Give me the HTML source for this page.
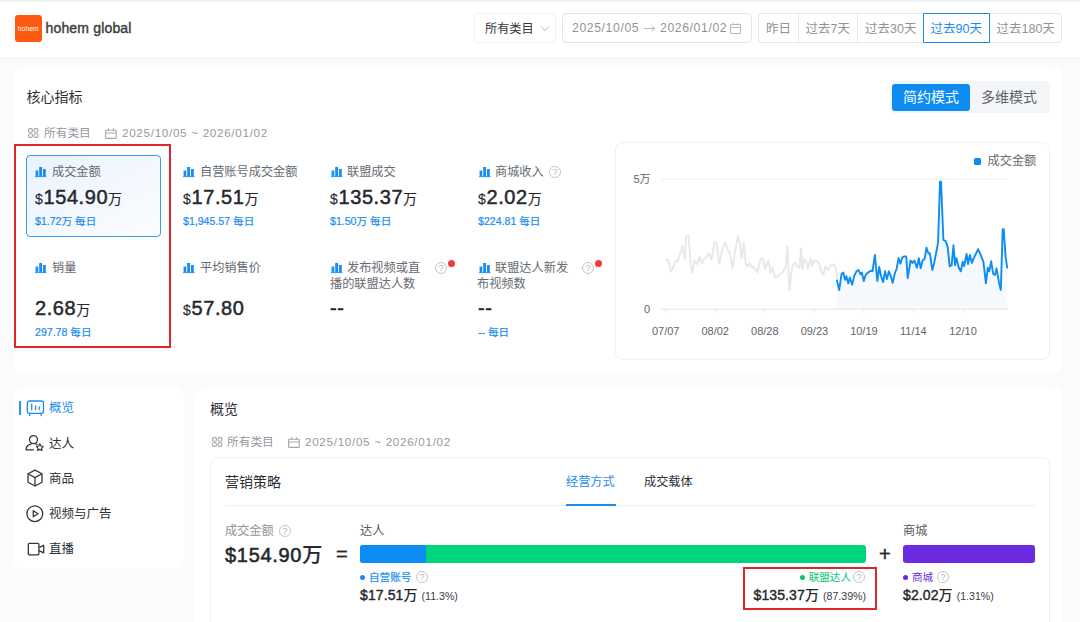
<!DOCTYPE html>
<html lang="zh-CN">
<head>
<meta charset="utf-8">
<title>hohem global</title>
<style>
*{box-sizing:border-box;margin:0;padding:0}
html,body{width:1080px;height:622px;overflow:hidden}
body{background:#fafbfc;font-family:"Liberation Sans","Noto Sans CJK SC",sans-serif;color:#333;position:relative;font-size:12px}
.abs{position:absolute;white-space:nowrap}
.card{position:absolute;background:#fff;border-radius:8px}
.t12{font-size:12.2px;line-height:16px}
.sb{font-size:12.5px;line-height:16px;color:#2b2f36}
.sb.blue{color:#1a8ef0}
.t11{font-size:10.6px;line-height:14px}
.t14{font-size:14px;line-height:20px}
.grey{color:#8f9399}
.hb{font-size:12.500px;line-height:16px}
.fl{font-size:11.700px;line-height:16px;color:#95999f}
.lab{color:#666a71}
.blue{color:#1a8ef0}
.t11.blue{-webkit-text-stroke:.2px #1a8ef0}
.val{font-weight:normal;-webkit-text-stroke:.48px #25282d;color:#25282d;line-height:26px;font-size:20px;letter-spacing:.55px}
.val small{font-size:14px;font-weight:normal;-webkit-text-stroke:.15px #25282d;letter-spacing:.8px}
.val .w{font-size:14px;font-weight:400;-webkit-text-stroke:.15px #25282d}
.dot{display:inline-block;width:5px;height:5px;border-radius:50%;background:currentColor;margin-right:4px;vertical-align:1.5px}
.q{display:inline-block;width:12px;height:12px;border:1px solid #c3c6cb;border-radius:50%;color:#b0b4ba;font-size:9px;line-height:10px;text-align:center;vertical-align:middle;font-family:"Liberation Sans",sans-serif}
svg{position:absolute;overflow:visible}
</style>
</head>
<body>
<!-- header -->
<div class="abs" style="left:0;top:0;width:1080px;height:59px;background:#fff;border-bottom:1px solid #eef0f2"></div>
<div class="abs" style="left:0;top:0;width:1080px;height:2px;background:#f1f2f3"></div>
<div class="abs" style="left:15px;top:15px;width:26.500px;height:26.500px;border-radius:3px;background:#fb5a10;color:#fff;font-size:6.800px;line-height:28px;text-align:center;letter-spacing:0">hohem</div>
<div class="abs" style="left:45.500px;top:18px;font-size:14px;line-height:20px;font-weight:normal;-webkit-text-stroke:.4px #3a3d42;color:#3a3d42;letter-spacing:.17px">hohem global</div>

<div class="abs" style="left:474px;top:13px;width:82px;height:30px;border:1px solid #eff0f2;border-radius:4px;background:#fff"></div>
<div class="abs t12" style="left:485px;top:21.300px;color:#33373d">所有类目</div>
<svg style="left:539.500px;top:25px" width="10" height="7" viewBox="0 0 10 7"><path d="M.8 1l4.200 4.600L9.200 1" fill="none" stroke="#b9bcc2" stroke-width="1"/></svg>

<div class="abs" style="left:562px;top:13px;width:190px;height:30px;border:1px solid #e2e4e8;border-radius:4px;background:#fff"></div>
<div class="abs t12" style="left:572px;top:20px;color:#8f9399;letter-spacing:.62px">2025/10/05</div>
<svg style="left:644px;top:24px" width="11" height="8" viewBox="0 0 11 8"><path d="M0 4.500h10.500M7.500 1.800l3 2.700-3 2.700" fill="none" stroke="#b5b9bf" stroke-width="1"/></svg>
<div class="abs t12" style="left:660px;top:20px;color:#8f9399;letter-spacing:.62px">2026/01/02</div>
<svg style="left:730px;top:23px" width="11" height="11" viewBox="0 0 11 11"><rect x="0.5" y="1.5" width="10" height="9" rx=".5" fill="none" stroke="#b5b9bf"/><path d="M3 0v2.500M8 0v2.500M1 4.500h9" stroke="#b5b9bf"/></svg>

<div class="abs" style="left:758px;top:13px;width:304px;height:30px;border:1px solid #e6e8eb;border-radius:4px;background:#fff"></div>
<div class="abs" style="left:798px;top:13px;width:1px;height:30px;background:#e6e8eb"></div>
<div class="abs" style="left:857px;top:13px;width:1px;height:30px;background:#e6e8eb"></div>
<div class="abs" style="left:923px;top:13px;width:67px;height:30px;border:1px solid #1a8ef0;background:#fff"></div>
<div class="abs hb grey" style="left:766px;top:20.500px">昨日</div>
<div class="abs hb grey" style="left:805.500px;top:20.500px">过去7天</div>
<div class="abs hb grey" style="left:865px;top:20.500px">过去30天</div>
<div class="abs hb blue" style="left:930.500px;top:20.500px">过去90天</div>
<div class="abs hb grey" style="left:996.500px;top:20.500px">过去180天</div>

<!-- core metrics card -->
<div class="card" style="left:14px;top:68px;width:1048px;height:304.500px"></div>
<div class="abs t14" style="left:26.500px;top:86.500px;color:#2b2f36">核心指标</div>

<div class="abs" style="left:890px;top:81px;width:160px;height:32px;background:#f4f5f7;border-radius:4px"></div>
<div class="abs" style="left:892px;top:83.500px;width:78px;height:27px;background:#0d8df2;border-radius:3px;color:#fff;font-size:14px;line-height:27px;text-align:center">简约模式</div>
<div class="abs" style="left:970px;top:83.500px;width:78px;height:27px;color:#60646b;font-size:14px;line-height:27px;text-align:center">多维模式</div>

<svg style="left:28px;top:128px" width="11" height="10" viewBox="0 0 11 10" fill="none" stroke="#a4a8ae" stroke-width="1.100"><rect x=".6" y=".6" width="3.800" height="3.600" rx="1.100"/><rect x="6.200" y=".6" width="3.800" height="3.600" rx="1.100"/><rect x=".6" y="5.800" width="3.800" height="3.600" rx="1.100"/><rect x="6.200" y="5.800" width="3.800" height="3.600" rx="1.100"/></svg>
<div class="abs fl" style="left:44px;top:125px">所有类目</div>
<svg style="left:105px;top:127.5px" width="12" height="11" viewBox="0 0 12 11" fill="none" stroke="#a4a8ae" stroke-width="1.100"><rect x=".6" y="2.200" width="10.600" height="8.200" rx=".6"/><path d="M3.400 .2v2.600M8.400 .2v2.600M.6 5h10.600" /></svg>
<div class="abs fl" style="left:122px;top:125px;letter-spacing:.68px">2025/10/05 ~ 2026/01/02</div>

<!-- red highlight -->
<div class="abs" style="left:14px;top:144px;width:156.500px;height:203.500px;border:2px solid #e0262d"></div>
<!-- selected metric -->
<div class="abs" style="left:26px;top:155px;width:134.500px;height:82px;border:1px solid #3a9df2;border-radius:4px;background:linear-gradient(150deg,#e8f3fe 0%,#f3f8fe 50%,#fbfdff 100%)"></div>

<!-- metric row 1 -->
<svg class="bi" style="left:35px;top:167px" width="12" height="10" viewBox="0 0 12 10"><path d="M.6 3.400h2.700v6H.6zM4.200 0h2.900v9.400H4.200zM8 1.900h2.800v7.500H8z" fill="#1a8ef0"/><path d="M0 9.600h11.500" stroke="#1a8ef0" stroke-width=".9"/></svg>
<div class="abs t12 lab" style="left:52px;top:164px">成交金额</div>
<div class="abs val" style="left:35px;top:184px"><small>$</small>154.90<span class="w">万</span></div>
<div class="abs t11 blue" style="left:35px;top:214px">$1.72万 每日</div>

<svg class="bi" style="left:183px;top:167px" width="12" height="10" viewBox="0 0 12 10"><path d="M.6 3.400h2.700v6H.6zM4.200 0h2.900v9.400H4.200zM8 1.900h2.800v7.500H8z" fill="#1a8ef0"/><path d="M0 9.600h11.500" stroke="#1a8ef0" stroke-width=".9"/></svg>
<div class="abs t12 lab" style="left:200px;top:164px">自营账号成交金额</div>
<div class="abs val" style="left:183px;top:184px"><small>$</small>17.51<span class="w">万</span></div>
<div class="abs t11 blue" style="left:183px;top:214px">$1,945.57 每日</div>

<svg class="bi" style="left:331px;top:167px" width="12" height="10" viewBox="0 0 12 10"><path d="M.6 3.400h2.700v6H.6zM4.200 0h2.900v9.400H4.200zM8 1.900h2.800v7.500H8z" fill="#1a8ef0"/><path d="M0 9.600h11.500" stroke="#1a8ef0" stroke-width=".9"/></svg>
<div class="abs t12 lab" style="left:347px;top:164px">联盟成交</div>
<div class="abs val" style="left:330px;top:184px"><small>$</small>135.37<span class="w">万</span></div>
<div class="abs t11 blue" style="left:330px;top:214px">$1.50万 每日</div>

<svg class="bi" style="left:479px;top:167px" width="12" height="10" viewBox="0 0 12 10"><path d="M.6 3.400h2.700v6H.6zM4.200 0h2.900v9.400H4.200zM8 1.900h2.800v7.500H8z" fill="#1a8ef0"/><path d="M0 9.600h11.500" stroke="#1a8ef0" stroke-width=".9"/></svg>
<div class="abs t12 lab" style="left:495px;top:164px">商城收入</div>
<div class="abs q" style="left:549px;top:165.500px">?</div>
<div class="abs val" style="left:478px;top:184px"><small>$</small>2.02<span class="w">万</span></div>
<div class="abs t11 blue" style="left:478px;top:214px">$224.81 每日</div>

<!-- metric row 2 -->
<svg class="bi" style="left:35px;top:263px" width="12" height="10" viewBox="0 0 12 10"><path d="M.6 3.400h2.700v6H.6zM4.200 0h2.900v9.400H4.200zM8 1.900h2.800v7.500H8z" fill="#1a8ef0"/><path d="M0 9.600h11.500" stroke="#1a8ef0" stroke-width=".9"/></svg>
<div class="abs t12 lab" style="left:52px;top:260px">销量</div>
<div class="abs val" style="left:35px;top:295px">2.68<span class="w">万</span></div>
<div class="abs t11 blue" style="left:35px;top:325px">297.78 每日</div>

<svg class="bi" style="left:183px;top:263px" width="12" height="10" viewBox="0 0 12 10"><path d="M.6 3.400h2.700v6H.6zM4.200 0h2.900v9.400H4.200zM8 1.900h2.800v7.500H8z" fill="#1a8ef0"/><path d="M0 9.600h11.500" stroke="#1a8ef0" stroke-width=".9"/></svg>
<div class="abs t12 lab" style="left:200px;top:260px">平均销售价</div>
<div class="abs val" style="left:183px;top:295px"><small>$</small>57.80</div>

<svg class="bi" style="left:331px;top:263px" width="12" height="10" viewBox="0 0 12 10"><path d="M.6 3.400h2.700v6H.6zM4.200 0h2.900v9.400H4.200zM8 1.900h2.800v7.500H8z" fill="#1a8ef0"/><path d="M0 9.600h11.500" stroke="#1a8ef0" stroke-width=".9"/></svg>
<div class="abs t12 lab" style="left:347px;top:260px">发布视频或直</div>
<div class="abs t12 lab" style="left:330px;top:276px">播的联盟达人数</div>
<div class="abs q" style="left:435px;top:262px">?</div>
<div class="abs" style="left:448px;top:260px;width:7px;height:7px;border-radius:50%;background:#ef3a3f"></div>
<div class="abs val" style="left:330px;top:295px">--</div>

<svg class="bi" style="left:479px;top:263px" width="12" height="10" viewBox="0 0 12 10"><path d="M.6 3.400h2.700v6H.6zM4.200 0h2.900v9.400H4.200zM8 1.900h2.800v7.500H8z" fill="#1a8ef0"/><path d="M0 9.600h11.500" stroke="#1a8ef0" stroke-width=".9"/></svg>
<div class="abs t12 lab" style="left:495px;top:260px">联盟达人新发</div>
<div class="abs t12 lab" style="left:477px;top:276px">布视频数</div>
<div class="abs q" style="left:582px;top:262px">?</div>
<div class="abs" style="left:595px;top:260px;width:7px;height:7px;border-radius:50%;background:#ef3a3f"></div>
<div class="abs val" style="left:478px;top:295px">--</div>
<div class="abs t11 blue" style="left:478px;top:325px">-- 每日</div>

<!-- chart -->
<div class="abs" style="left:615px;top:142px;width:435px;height:218px;border:1px solid #eff0f2;border-radius:8px;background:#fff"></div>
<div class="abs" style="left:974px;top:158px;width:7px;height:7px;border-radius:1.500px;background:#0d8df2"></div>
<div class="abs t12 lab" style="left:987.500px;top:153px">成交金额</div>
<svg style="left:0;top:0" width="1080" height="622" viewBox="0 0 1080 622">
  <line x1="661" y1="179.2" x2="1008" y2="179.2" stroke="#eef0f2" stroke-width="1"/>
  <defs><linearGradient id="ag" x1="0" y1="0" x2="0" y2="1"><stop offset="0" stop-color="#f0f6fc"/><stop offset="1" stop-color="#f7fafd"/></linearGradient></defs>
  <polygon points="836.8,279.8 839.2,290.1 841.6,273.7 843.3,272.5 845.0,279.8 846.4,276.2 848.3,283.4 849.8,277.4 852.2,284.6 854.1,276.2 856.5,271.3 858.5,270.1 860.4,274.2 861.8,272.5 863.8,281.0 865.7,274.9 868.1,272.5 870.5,270.8 872.5,271.3 874.9,254.9 877.3,281.0 879.2,267.0 881.1,276.2 883.1,282.2 885.0,271.3 886.9,279.0 888.9,271.3 890.8,276.2 892.7,282.9 894.7,273.7 896.6,268.9 898.5,258.1 900.4,263.6 902.4,257.3 904.3,256.4 906.2,256.4 907.7,278.1 910.6,260.5 912.5,262.9 914.4,260.5 916.9,267.7 918.8,258.1 920.7,268.4 922.6,260.5 924.6,258.8 926.5,247.7 928.4,253.2 929.9,253.2 932.3,270.1 934.2,262.9 938.1,242.4 940.0,181.6 941.0,181.6 943.4,240.0 945.8,241.2 947.7,247.2 949.7,266.5 951.6,265.3 953.5,245.3 955.0,265.3 956.4,258.1 958.8,267.7 960.8,271.3 962.7,261.7 964.1,266.0 966.6,254.0 968.0,264.1 969.9,254.9 971.9,262.9 973.8,258.1 978.1,249.1 980.5,254.4 983.4,261.7 985.9,283.4 987.8,267.7 989.2,271.3 991.2,261.2 993.1,273.7 995.0,274.9 996.5,268.4 998.9,282.2 1000.8,289.9 1002.7,229.1 1003.7,229.1 1005.6,256.9 1007.3,268.4 1007.3,309.2 836.8,309.2" fill="url(#ag)"/>
  <line x1="661" y1="309.2" x2="1008" y2="309.2" stroke="#e4e6ea" stroke-width="1"/>
  <g stroke="#e4e6ea" stroke-width="1">
    <line x1="665.7" y1="309" x2="665.7" y2="313"/><line x1="715.2" y1="309" x2="715.2" y2="313"/><line x1="764.8" y1="309" x2="764.8" y2="313"/><line x1="814.4" y1="309" x2="814.4" y2="313"/><line x1="863.9" y1="309" x2="863.9" y2="313"/><line x1="913.4" y1="309" x2="913.4" y2="313"/><line x1="963" y1="309" x2="963" y2="313"/>
  </g>
  <polyline points="665.7,260.5 668.1,259.7 671.2,271.3 673.6,266.5 675.3,261.2 677.7,261.7 680.2,253.2 682.6,246.0 685.0,259.3 686.2,236.3 688.6,235.6 690.5,261.7 692.2,273.3 694.6,260.5 697.0,264.1 699.5,256.9 701.9,262.9 704.3,258.8 706.7,256.9 708.6,253.2 711.5,259.3 714.7,241.9 716.3,242.4 719.5,263.6 722.4,249.6 725.3,242.4 727.7,249.6 730.1,254.4 732.5,268.9 734.9,252.0 738.1,236.3 739.7,242.4 741.7,258.1 743.6,242.4 745.8,264.1 747.7,266.5 749.4,262.9 751.3,266.5 754.2,267.7 757.4,272.5 760.5,259.3 762.9,258.8 765.3,268.9 768.2,260.5 770.6,272.5 772.6,267.7 775.0,277.4 777.9,276.2 780.3,273.7 782.7,272.5 785.6,266.5 787.5,246.0 789.4,290.1 792.3,266.5 794.8,262.9 797.6,266.5 799.6,267.7 801.0,248.4 802.5,268.9 804.4,259.3 806.8,262.9 808.0,268.9 810.4,258.1 812.1,266.5 814.1,260.5 816.5,261.2 818.9,262.9 821.3,271.3 823.2,274.9 825.6,266.5 828.0,270.1 830.5,265.3 833.4,264.6 835.8,267.7 837.7,281.0" fill="none" stroke="#e8e8e8" stroke-width="1.9" stroke-linejoin="round"/>
  <polyline points="836.8,279.8 839.2,290.1 841.6,273.7 843.3,272.5 845.0,279.8 846.4,276.2 848.3,283.4 849.8,277.4 852.2,284.6 854.1,276.2 856.5,271.3 858.5,270.1 860.4,274.2 861.8,272.5 863.8,281.0 865.7,274.9 868.1,272.5 870.5,270.8 872.5,271.3 874.9,254.9 877.3,281.0 879.2,267.0 881.1,276.2 883.1,282.2 885.0,271.3 886.9,279.0 888.9,271.3 890.8,276.2 892.7,282.9 894.7,273.7 896.6,268.9 898.5,258.1 900.4,263.6 902.4,257.3 904.3,256.4 906.2,256.4 907.7,278.1 910.6,260.5 912.5,262.9 914.4,260.5 916.9,267.7 918.8,258.1 920.7,268.4 922.6,260.5 924.6,258.8 926.5,247.7 928.4,253.2 929.9,253.2 932.3,270.1 934.2,262.9 938.1,242.4 940.0,181.6 941.0,181.6 943.4,240.0 945.8,241.2 947.7,247.2 949.7,266.5 951.6,265.3 953.5,245.3 955.0,265.3 956.4,258.1 958.8,267.7 960.8,271.3 962.7,261.7 964.1,266.0 966.6,254.0 968.0,264.1 969.9,254.9 971.9,262.9 973.8,258.1 978.1,249.1 980.5,254.4 983.4,261.7 985.9,283.4 987.8,267.7 989.2,271.3 991.2,261.2 993.1,273.7 995.0,274.9 996.5,268.4 998.9,282.2 1000.8,289.9 1002.7,229.1 1003.7,229.1 1005.6,256.9 1007.3,268.4" fill="none" stroke="#0d8df2" stroke-width="1.9" stroke-linejoin="round"/>
  <g font-size="11" fill="#60656c" font-family="Liberation Sans, Noto Sans CJK SC, sans-serif">
    <text x="650.500" y="182.600" text-anchor="end">5万</text>
    <text x="650" y="313" text-anchor="end">0</text>
    <g text-anchor="middle">
      <text x="665.7" y="335">07/07</text><text x="715.2" y="335">08/02</text><text x="764.8" y="335">08/28</text><text x="814.4" y="335">09/23</text><text x="863.9" y="335">10/19</text><text x="913.4" y="335">11/14</text><text x="963" y="335">12/10</text>
    </g>
  </g>
</svg>

<!-- sidebar -->
<div class="card" style="left:14px;top:387.500px;width:170px;height:181.500px"></div>
<div class="abs" style="left:19px;top:401px;width:2px;height:14px;background:#2a93ee"></div>
<svg style="left:26px;top:400px" width="19" height="17" viewBox="0 0 19 17" fill="none" stroke="#1a8ef0" stroke-width="1.300" stroke-linecap="round"><rect x="1.300" y="1" width="16.200" height="12.300" rx="2"/><path d="M5.700 4.200v5.400M9.600 6.100v3.500M13.200 7v2.600M4 13.600l-.5 2M14.800 13.600l.5 2"/></svg>
<div class="abs sb blue" style="left:49px;top:400px">概览</div>

<svg style="left:25px;top:435px" width="20" height="17" viewBox="0 0 20 17" fill="none" stroke="#33373d" stroke-width="1.300" stroke-linecap="round" stroke-linejoin="round"><circle cx="8.500" cy="4.600" r="4"/><path d="M1 14.800c0-3.300 2.300-5.300 5.300-6M1 14.800h7.500M10.700 8.800c.6.200 1 .4 1.500.7"/><path d="M14.800 8.800l1.100 2.200 2.400.4-1.700 1.700.4 2.400-2.200-1.100-2.200 1.100.4-2.400-1.700-1.700 2.400-.4z" stroke-width="1.200"/></svg>
<div class="abs sb" style="left:49px;top:436px">达人</div>

<svg style="left:26px;top:469px" width="18" height="18" viewBox="0 0 18 18" fill="none" stroke="#33373d" stroke-width="1.300" stroke-linejoin="round"><path d="M9 1.100l7 3.700v8.400L9 17l-7-3.800V4.800z"/><path d="M2 4.800L9 8.600l7-3.800M9 8.600V17"/></svg>
<div class="abs sb" style="left:49px;top:471px">商品</div>

<svg style="left:26px;top:505px" width="18" height="18" viewBox="0 0 18 18" fill="none" stroke="#33373d" stroke-width="1.300" stroke-linejoin="round"><circle cx="8.800" cy="8.700" r="7.900"/><path d="M7.300 5.700v6l4.700-3z"/></svg>
<div class="abs sb" style="left:49px;top:506px">视频与广告</div>

<svg style="left:26px;top:542px" width="19" height="15" viewBox="0 0 19 15" fill="none" stroke="#33373d" stroke-width="1.300" stroke-linejoin="round"><rect x="2.300" y="1.400" width="10.600" height="11.400" rx="1.300"/><path d="M13 5.600l4.700-2.300v7.600L13 8.600"/></svg>
<div class="abs sb" style="left:49px;top:541px">直播</div>

<!-- overview main -->
<div class="card" style="left:195px;top:387.500px;width:867px;height:260px"></div>
<div class="abs t14" style="left:210px;top:399px;color:#2b2f36">概览</div>
<svg style="left:212px;top:437px" width="11" height="10" viewBox="0 0 11 10" fill="none" stroke="#a4a8ae" stroke-width="1.100"><rect x=".6" y=".6" width="3.800" height="3.600" rx="1.100"/><rect x="6.200" y=".6" width="3.800" height="3.600" rx="1.100"/><rect x=".6" y="5.800" width="3.800" height="3.600" rx="1.100"/><rect x="6.200" y="5.800" width="3.800" height="3.600" rx="1.100"/></svg>
<div class="abs fl" style="left:227px;top:434px">所有类目</div>
<svg style="left:288px;top:436.5px" width="12" height="11" viewBox="0 0 12 11" fill="none" stroke="#a4a8ae" stroke-width="1.100"><rect x=".6" y="2.200" width="10.600" height="8.200" rx=".6"/><path d="M3.400 .2v2.600M8.400 .2v2.600M.6 5h10.600" /></svg>
<div class="abs fl" style="left:305px;top:434px;letter-spacing:.68px">2025/10/05 ~ 2026/01/02</div>

<div class="abs" style="left:210px;top:457px;width:840px;height:200px;border:1px solid #eff0f2;border-radius:8px;background:#fff"></div>
<div class="abs t14" style="left:225px;top:472px;color:#2b2f36">营销策略</div>
<div class="abs t12 blue" style="left:566px;top:474px">经营方式</div>
<div class="abs t12" style="left:644px;top:474px;color:#2b2f36">成交载体</div>
<div class="abs" style="left:225px;top:505px;width:811px;height:1px;background:#eeeff1"></div>
<div class="abs" style="left:566px;top:504px;width:50px;height:2px;background:#1a8ef0"></div>

<div class="abs t12 lab" style="left:225px;top:523px;color:#8f9399">成交金额</div>
<div class="abs q" style="left:279px;top:525px">?</div>
<div class="abs" style="left:225px;top:542px;font-size:20px;line-height:26px;-webkit-text-stroke:.55px #25282d;color:#25282d;letter-spacing:.7px">$154.90<span style="font-weight:500;-webkit-text-stroke:.2px #25282d">万</span></div>
<div class="abs" style="left:336px;top:541px;font-size:20px;line-height:26px;font-weight:normal;-webkit-text-stroke:.4px #25282d;color:#25282d">=</div>
<div class="abs t12" style="left:360px;top:523px;color:#555a61">达人</div>
<div class="abs" style="left:360px;top:545px;width:506px;height:18px;border-radius:3px;background:#00d47c;overflow:hidden"><div style="width:66px;height:18px;background:#0d8df2"></div></div>
<div class="abs" style="left:879px;top:541px;font-size:20px;line-height:26px;font-weight:normal;-webkit-text-stroke:.4px #25282d;color:#25282d">+</div>
<div class="abs t12" style="left:903px;top:523px;color:#555a61">商城</div>
<div class="abs" style="left:903px;top:545px;width:132px;height:18px;border-radius:3px;background:#6b2be0"></div>

<div class="abs t11 blue" style="left:360px;top:570px"><i class="dot"></i>自营账号</div>
<div class="abs q" style="left:416px;top:571px">?</div>
<div class="abs" style="left:360px;top:585px;font-size:14px;line-height:20px;-webkit-text-stroke:.4px #25282d;color:#25282d;letter-spacing:.1px">$17.51<span style="font-weight:500;-webkit-text-stroke:0">万</span> <span style="font-size:10.600px;-webkit-text-stroke:0;color:#3a3e44;letter-spacing:0">(11.3%)</span></div>

<div class="abs" style="left:743px;top:567px;width:134px;height:43px;border:2px solid #e0262d"></div>
<div class="abs t11" style="right:229px;top:570px;color:#00c777"><i class="dot"></i>联盟达人</div>
<div class="abs q" style="left:853px;top:571px">?</div>
<div class="abs" style="right:214px;top:585px;font-size:14px;line-height:20px;-webkit-text-stroke:.4px #25282d;color:#25282d;letter-spacing:.1px">$135.37<span style="font-weight:500;-webkit-text-stroke:0">万</span> <span style="font-size:10.600px;-webkit-text-stroke:0;color:#3a3e44;letter-spacing:0">(87.39%)</span></div>

<div class="abs t11" style="left:903px;top:570px;color:#6b2be0"><i class="dot"></i>商城</div>
<div class="abs q" style="left:937px;top:571px">?</div>
<div class="abs" style="left:903px;top:585px;font-size:14px;line-height:20px;-webkit-text-stroke:.4px #25282d;color:#25282d;letter-spacing:.1px">$2.02<span style="font-weight:500;-webkit-text-stroke:0">万</span> <span style="font-size:10.600px;-webkit-text-stroke:0;color:#3a3e44;letter-spacing:0">(1.31%)</span></div>
</body>
</html>
